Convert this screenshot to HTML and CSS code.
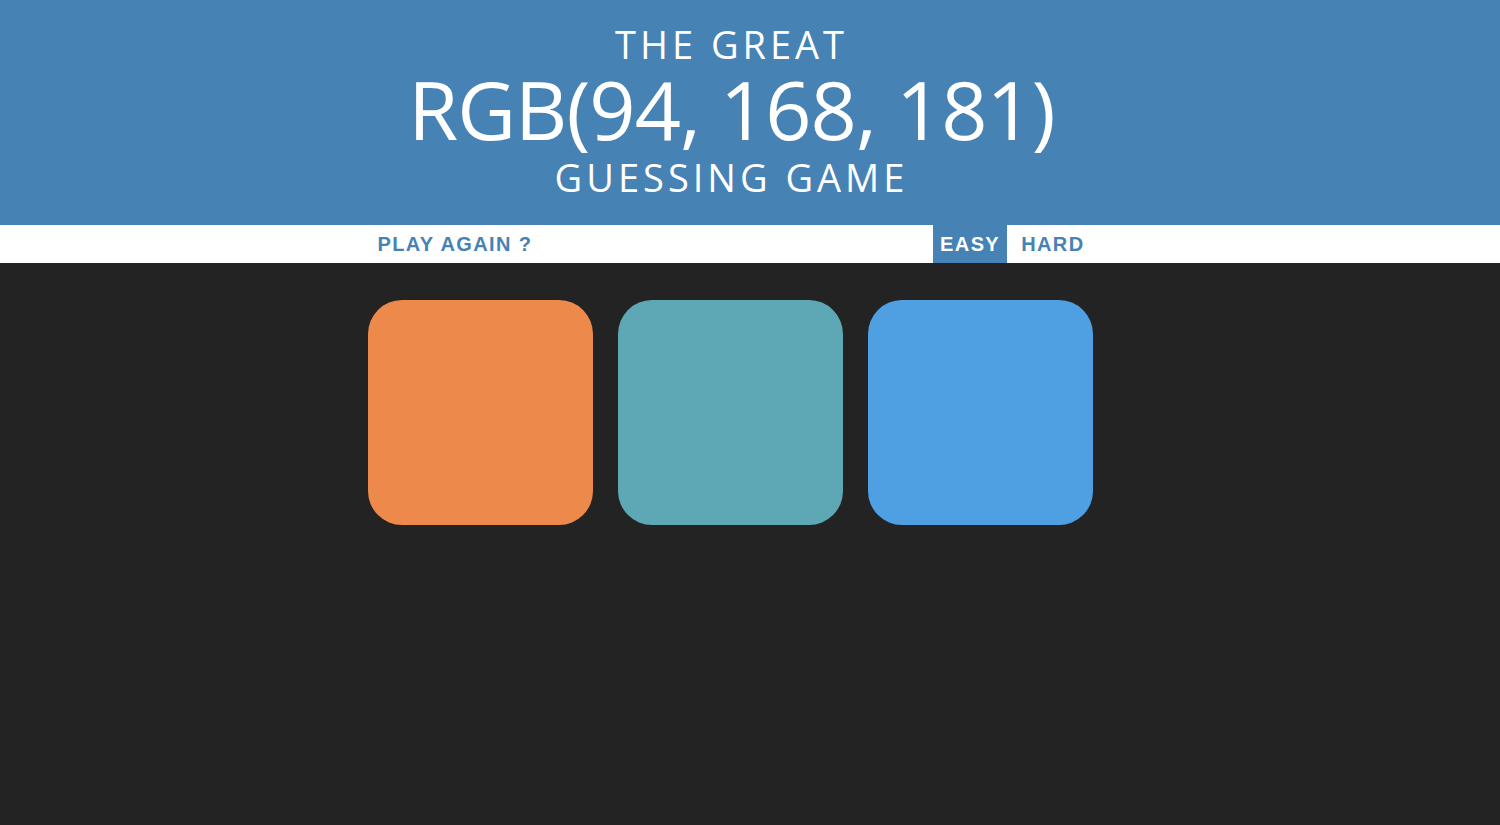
FILE: index.html
```html
<!DOCTYPE html>
<html lang="en">
<head>
<meta charset="utf-8">
<title>Colour Game</title>
<link rel="stylesheet" href="styles.css">
</head>
<body>
  <header class="banner">
    <h1 class="title">
      <span class="title-small">THE GREAT</span>
      <span class="title-big">RGB(94, 168, 181)</span>
      <span class="title-small title-last">GUESSING GAME</span>
    </h1>
  </header>
  <nav class="stripe">
    <div class="stripe-inner">
      <button class="btn btn-reset">PLAY AGAIN ?</button>
      <span class="message"></span>
      <button class="btn mode selected">EASY</button>
      <button class="btn mode mode-hard">HARD</button>
    </div>
  </nav>
  <main class="board">
    <div class="square sq-orange"></div>
    <div class="square sq-teal"></div>
    <div class="square sq-blue"></div>
  </main>
</body>
</html>
```
FILE: styles.css
```css
html, body {
  margin: 0;
  padding: 0;
}
body {
  background: #232323;
  font-family: "Liberation Sans", Arial, sans-serif;
}
.banner {
  background: #4682b4;
  height: 225px;
  box-sizing: border-box;
  padding-right: 37px;
}
.title {
  margin: 0;
  color: #fff;
  font-family: "Open Sans", sans-serif;
  font-weight: 400;
  text-align: center;
  display: flex;
  flex-direction: column;
  align-items: center;
  padding-top: 24px;
}
.title-small {
  font-size: 38px;
  line-height: 40px;
  letter-spacing: 4px;
}
.title-last {
  line-height: 48px;
}
.title-big {
  font-size: 81px;
  line-height: 89px;
  letter-spacing: -1px;
}
.stripe {
  background: #fff;
  height: 38px;
  padding-right: 39px;
}
.stripe-inner {
  width: 750px;
  height: 100%;
  margin: 0 auto;
  display: flex;
  align-items: stretch;
}
.btn {
  border: none;
  background: none;
  font-family: "Liberation Sans", Arial, sans-serif;
  font-weight: 700;
  font-size: 20px;
  letter-spacing: 1.4px;
  color: #4682b4;
  text-transform: uppercase;
  padding: 0 8px;
  cursor: pointer;
  outline: none;
}
.btn-reset {
  padding-left: 22px;
}
.message {
  flex: 1;
}
.mode.selected {
  background: #4682b4;
  color: #fff;
  padding: 0 7px;
}
.mode-hard {
  padding-left: 14px;
  margin-right: 13px;
}
.board {
  width: 750px;
  margin: 0 auto;
  padding: 37px 0 0 0;
  display: flex;
  justify-content: center;
  gap: 25px;
  box-sizing: border-box;
  position: relative;
  left: -19.5px;
}
.square {
  width: 225px;
  height: 225px;
  border-radius: 34px;
}
.sq-orange { background: #ed8a4b; }
.sq-teal { background: #5ea8b5; }
.sq-blue { background: #4ea0e2; }
```
